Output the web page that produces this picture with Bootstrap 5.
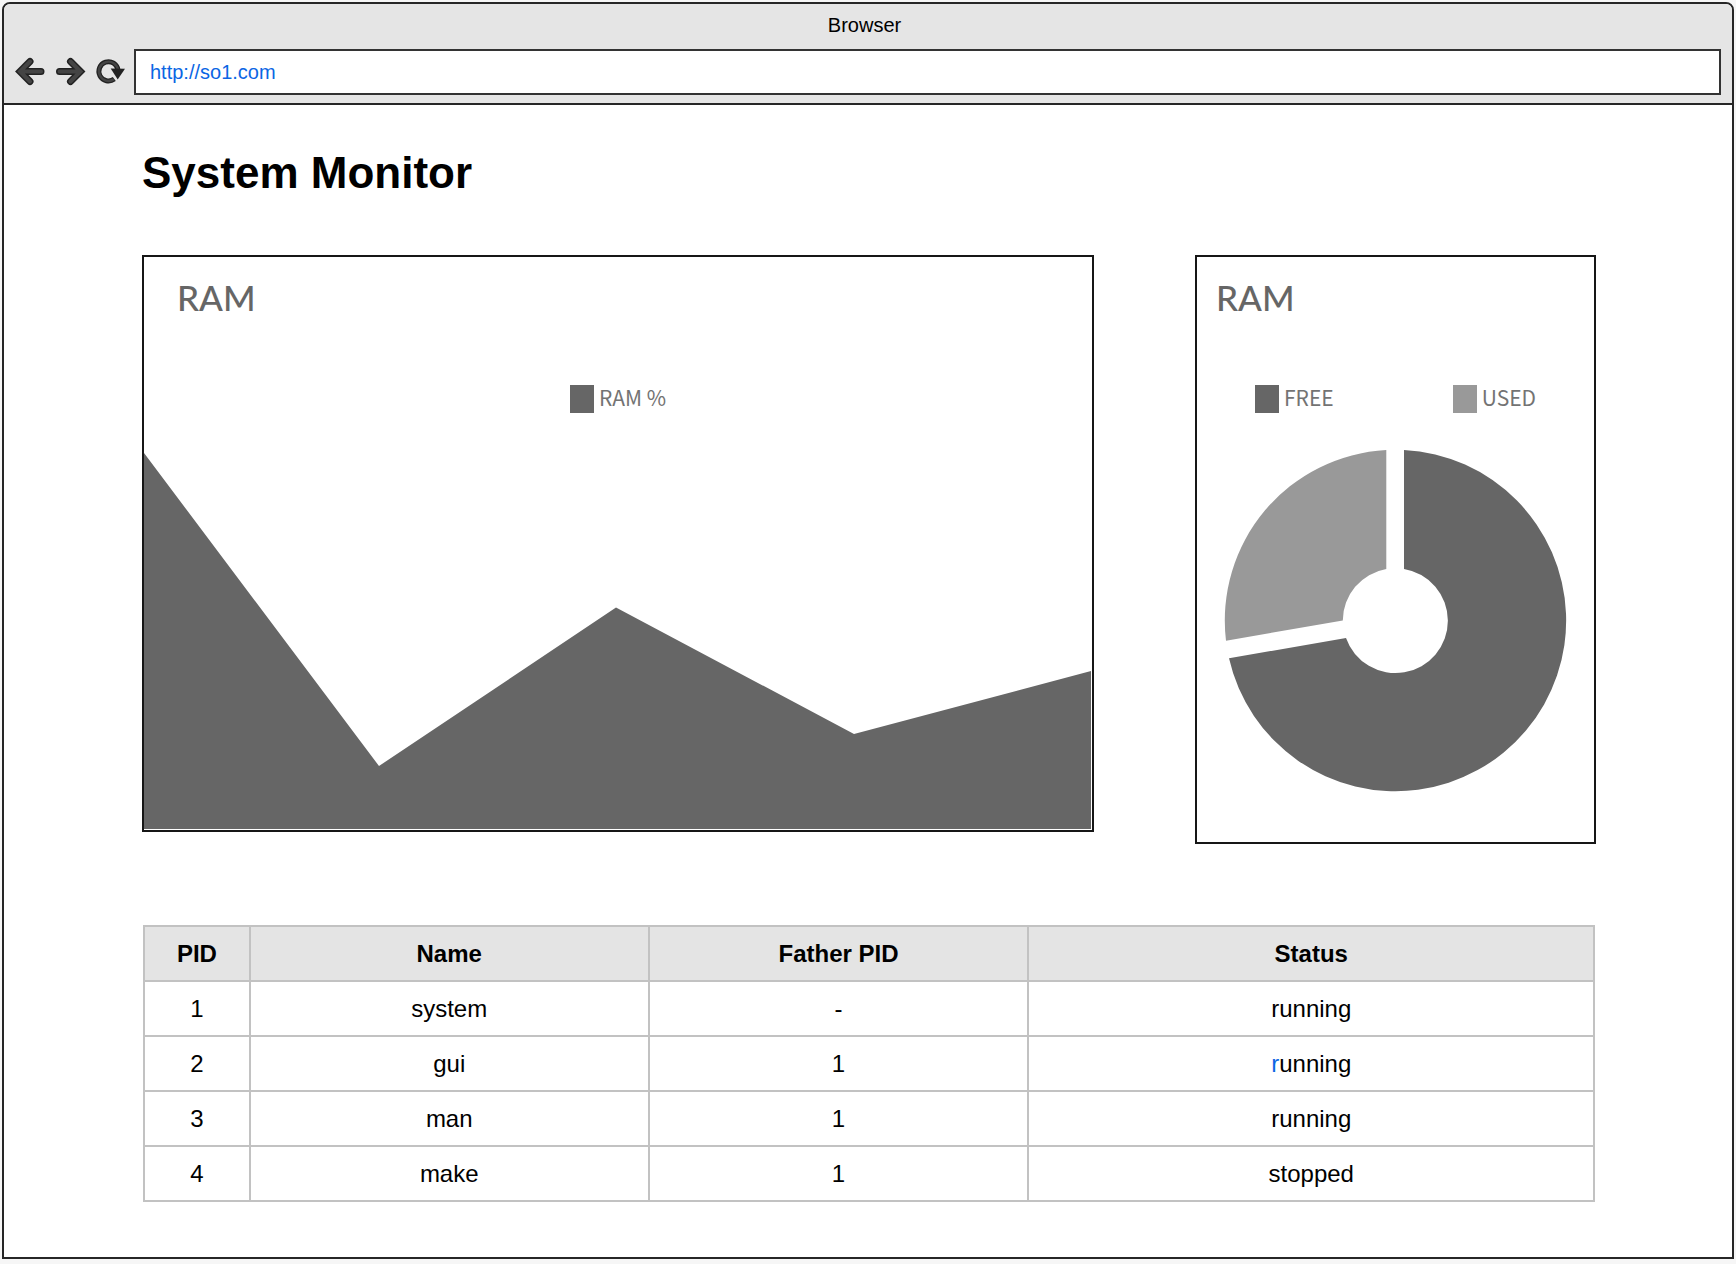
<!DOCTYPE html>
<html lang="en">
<head>
<meta charset="utf-8">
<meta name="viewport" content="width=device-width, initial-scale=1">
<title>System Monitor</title>
<link href="https://cdn.jsdelivr.net/npm/bootstrap@5.3.0/dist/css/bootstrap.min.css" rel="stylesheet">
<style>
  body { background: #f6f6f6; color: #000; font-family: "Liberation Sans", Arial, sans-serif; }
  .frame { margin: 2px 2px 5px; border: 2px solid #262626; border-radius: 8px 8px 0 0; min-height: calc(100vh - 7px); overflow: hidden; }
  .chrome-bar { background: #e5e5e5; border-bottom: 2px solid #262626; padding: 6px 11px 8px 12px; font-size: 20px; }
  .chrome-title { line-height: 30px; margin-bottom: 9px; }
  .tools { gap: 12px; margin-right: 10px; }
  .tool { width: 28px; height: 28px; overflow: visible; display: block; }
  .url { height: 46px; border: 2px solid #333; padding: 0 14px; font-size: 20px; color: #0b66e4; background: #fff; min-width: 0; }
  .page { padding: 42px 136px 55px 138px; }
  .page-title { font-size: 44px; line-height: 52px; font-weight: 700; margin-bottom: 56px; }
  .charts { display: grid; grid-template-columns: 952fr 401fr; gap: 101px; margin-bottom: 81px; }
  .panel { border: 2px solid #161616; padding-top: 18px; }
  .panel-title { font-family: Lato, sans-serif; font-size: 35px; line-height: 44px; color: #666; margin-bottom: 66px; }
  .area-panel .panel-title { padding-left: 33px; }
  .donut-panel .panel-title { padding-left: 19px; }
  .legend-row { font-family: "Noto Sans CJK SC", sans-serif; font-size: 21px; line-height: 24px; color: #737373; }
  .legend-item { gap: 5px; }
  .swatch { width: 24px; height: 28px; background: #666; }
  .swatch.used { background: #999; }
  .area-panel .legend-row { margin-bottom: 37px; }
  .donut-panel .legend-row { margin-bottom: 36px; padding: 0 58px; }
  .area-plot { padding: 0 1px 1px 0; }
  .donut-plot { padding: 0 27px 50px; }
  .procs { margin: 0 1px; font-size: 24px; line-height: 28px; }
  .procs table { table-layout: fixed; --bs-table-color: #000; color: #000; }
  .procs th, .procs td { height: 55px; padding: 0 8px; border: 2px solid #c2c2c2; vertical-align: middle; }
  .procs thead th { background: #e4e4e4; }
  .mark-blue { color: #0b66e4; }
  .c-pid { width: 7.3%; } .c-name { width: 27.5%; } .c-father { width: 26.2%; } .c-status { width: 39%; }
</style>
</head>
<body>
<div class="frame bg-white">
  <header class="chrome-bar">
    <div class="chrome-title text-center pe-2">Browser</div>
    <div class="d-flex align-items-center">
      <div class="tools d-flex flex-shrink-0">
        <button type="button" class="btn p-0 border-0" aria-label="Back">
          <svg class="tool" viewBox="0 0 28 28" fill="none" stroke-linecap="round">
            <path d="M14 3.500 4 13.500 14 23.500M5 13.500H25" stroke="#222" stroke-width="7"/>
            <path d="M14 3.500 4 13.500 14 23.500M5 13.500H25" stroke="#444" stroke-width="4"/>
          </svg>
        </button>
        <button type="button" class="btn p-0 border-0" aria-label="Forward">
          <svg class="tool" viewBox="0 0 28 28" fill="none" stroke-linecap="round">
            <path d="M14.500 3.500 24.500 13.500 14.500 23.500M23.500 13.500H3.500" stroke="#222" stroke-width="7"/>
            <path d="M14.500 3.500 24.500 13.500 14.500 23.500M23.500 13.500H3.500" stroke="#444" stroke-width="4"/>
          </svg>
        </button>
        <button type="button" class="btn p-0 border-0" aria-label="Reload">
          <svg class="tool" viewBox="0 0 28 28" fill="none">
            <path d="M22 12A9.600 9.600 0 1 0 18.300 21" stroke="#222" stroke-width="5"/>
            <path d="M22 12A9.600 9.600 0 1 0 17.800 21.300" stroke="#444" stroke-width="2.400"/>
            <path d="M14.700 10.500 29 10.800 21.700 21.500Z" fill="#222"/>
          </svg>
        </button>
      </div>
      <input class="url flex-grow-1 rounded-0" type="text" value="http://so1.com" aria-label="Address">
    </div>
  </header>

  <main class="page">
    <h1 class="page-title">System Monitor</h1>

    <div class="charts align-items-start">
      <section class="panel area-panel">
        <h2 class="panel-title">RAM</h2>
        <div class="legend-row d-flex justify-content-center">
          <div class="legend-item d-flex"><span class="swatch"></span>RAM %</div>
        </div>
        <div class="area-plot">
          <svg class="d-block w-100" viewBox="0 0 947 379" role="img" aria-label="RAM usage over time">
            <path d="M0 3 235 316 472 157.500 710 284 947 221V379H0Z" fill="#666"/>
          </svg>
        </div>
      </section>

      <section class="panel donut-panel">
        <h2 class="panel-title">RAM</h2>
        <div class="legend-row d-flex justify-content-between">
          <div class="legend-item d-flex"><span class="swatch"></span>FREE</div>
          <div class="legend-item d-flex"><span class="swatch used"></span>USED</div>
        </div>
        <div class="donut-plot">
          <svg class="d-block w-100" viewBox="0 0 343 343" role="img" aria-label="Free and used RAM">
            <path d="M180 1A170.700 170.700 0 1 1 5 209.300L122 189A52.400 52.400 0 1 0 180 120Z" fill="#666"/>
            <path d="M162.300 1A170.700 170.700 0 0 0 2 191.700L118.800 171.500A52.400 52.400 0 0 1 162.300 120Z" fill="#999"/>
          </svg>
        </div>
      </section>
    </div>

    <div class="procs">
      <table class="table mb-0 text-center align-middle">
        <colgroup><col class="c-pid"><col class="c-name"><col class="c-father"><col class="c-status"></colgroup>
        <thead>
          <tr><th scope="col">PID</th><th scope="col">Name</th><th scope="col">Father PID</th><th scope="col">Status</th></tr>
        </thead>
        <tbody>
          <tr><td>1</td><td>system</td><td>-</td><td>running</td></tr>
          <tr><td>2</td><td>gui</td><td>1</td><td><span class="mark-blue">r</span>unning</td></tr>
          <tr><td>3</td><td>man</td><td>1</td><td>running</td></tr>
          <tr><td>4</td><td>make</td><td>1</td><td>stopped</td></tr>
        </tbody>
      </table>
    </div>
  </main>
</div>
<script src="https://cdn.jsdelivr.net/npm/bootstrap@5.3.0/dist/js/bootstrap.bundle.min.js"></script>
</body>
</html>
